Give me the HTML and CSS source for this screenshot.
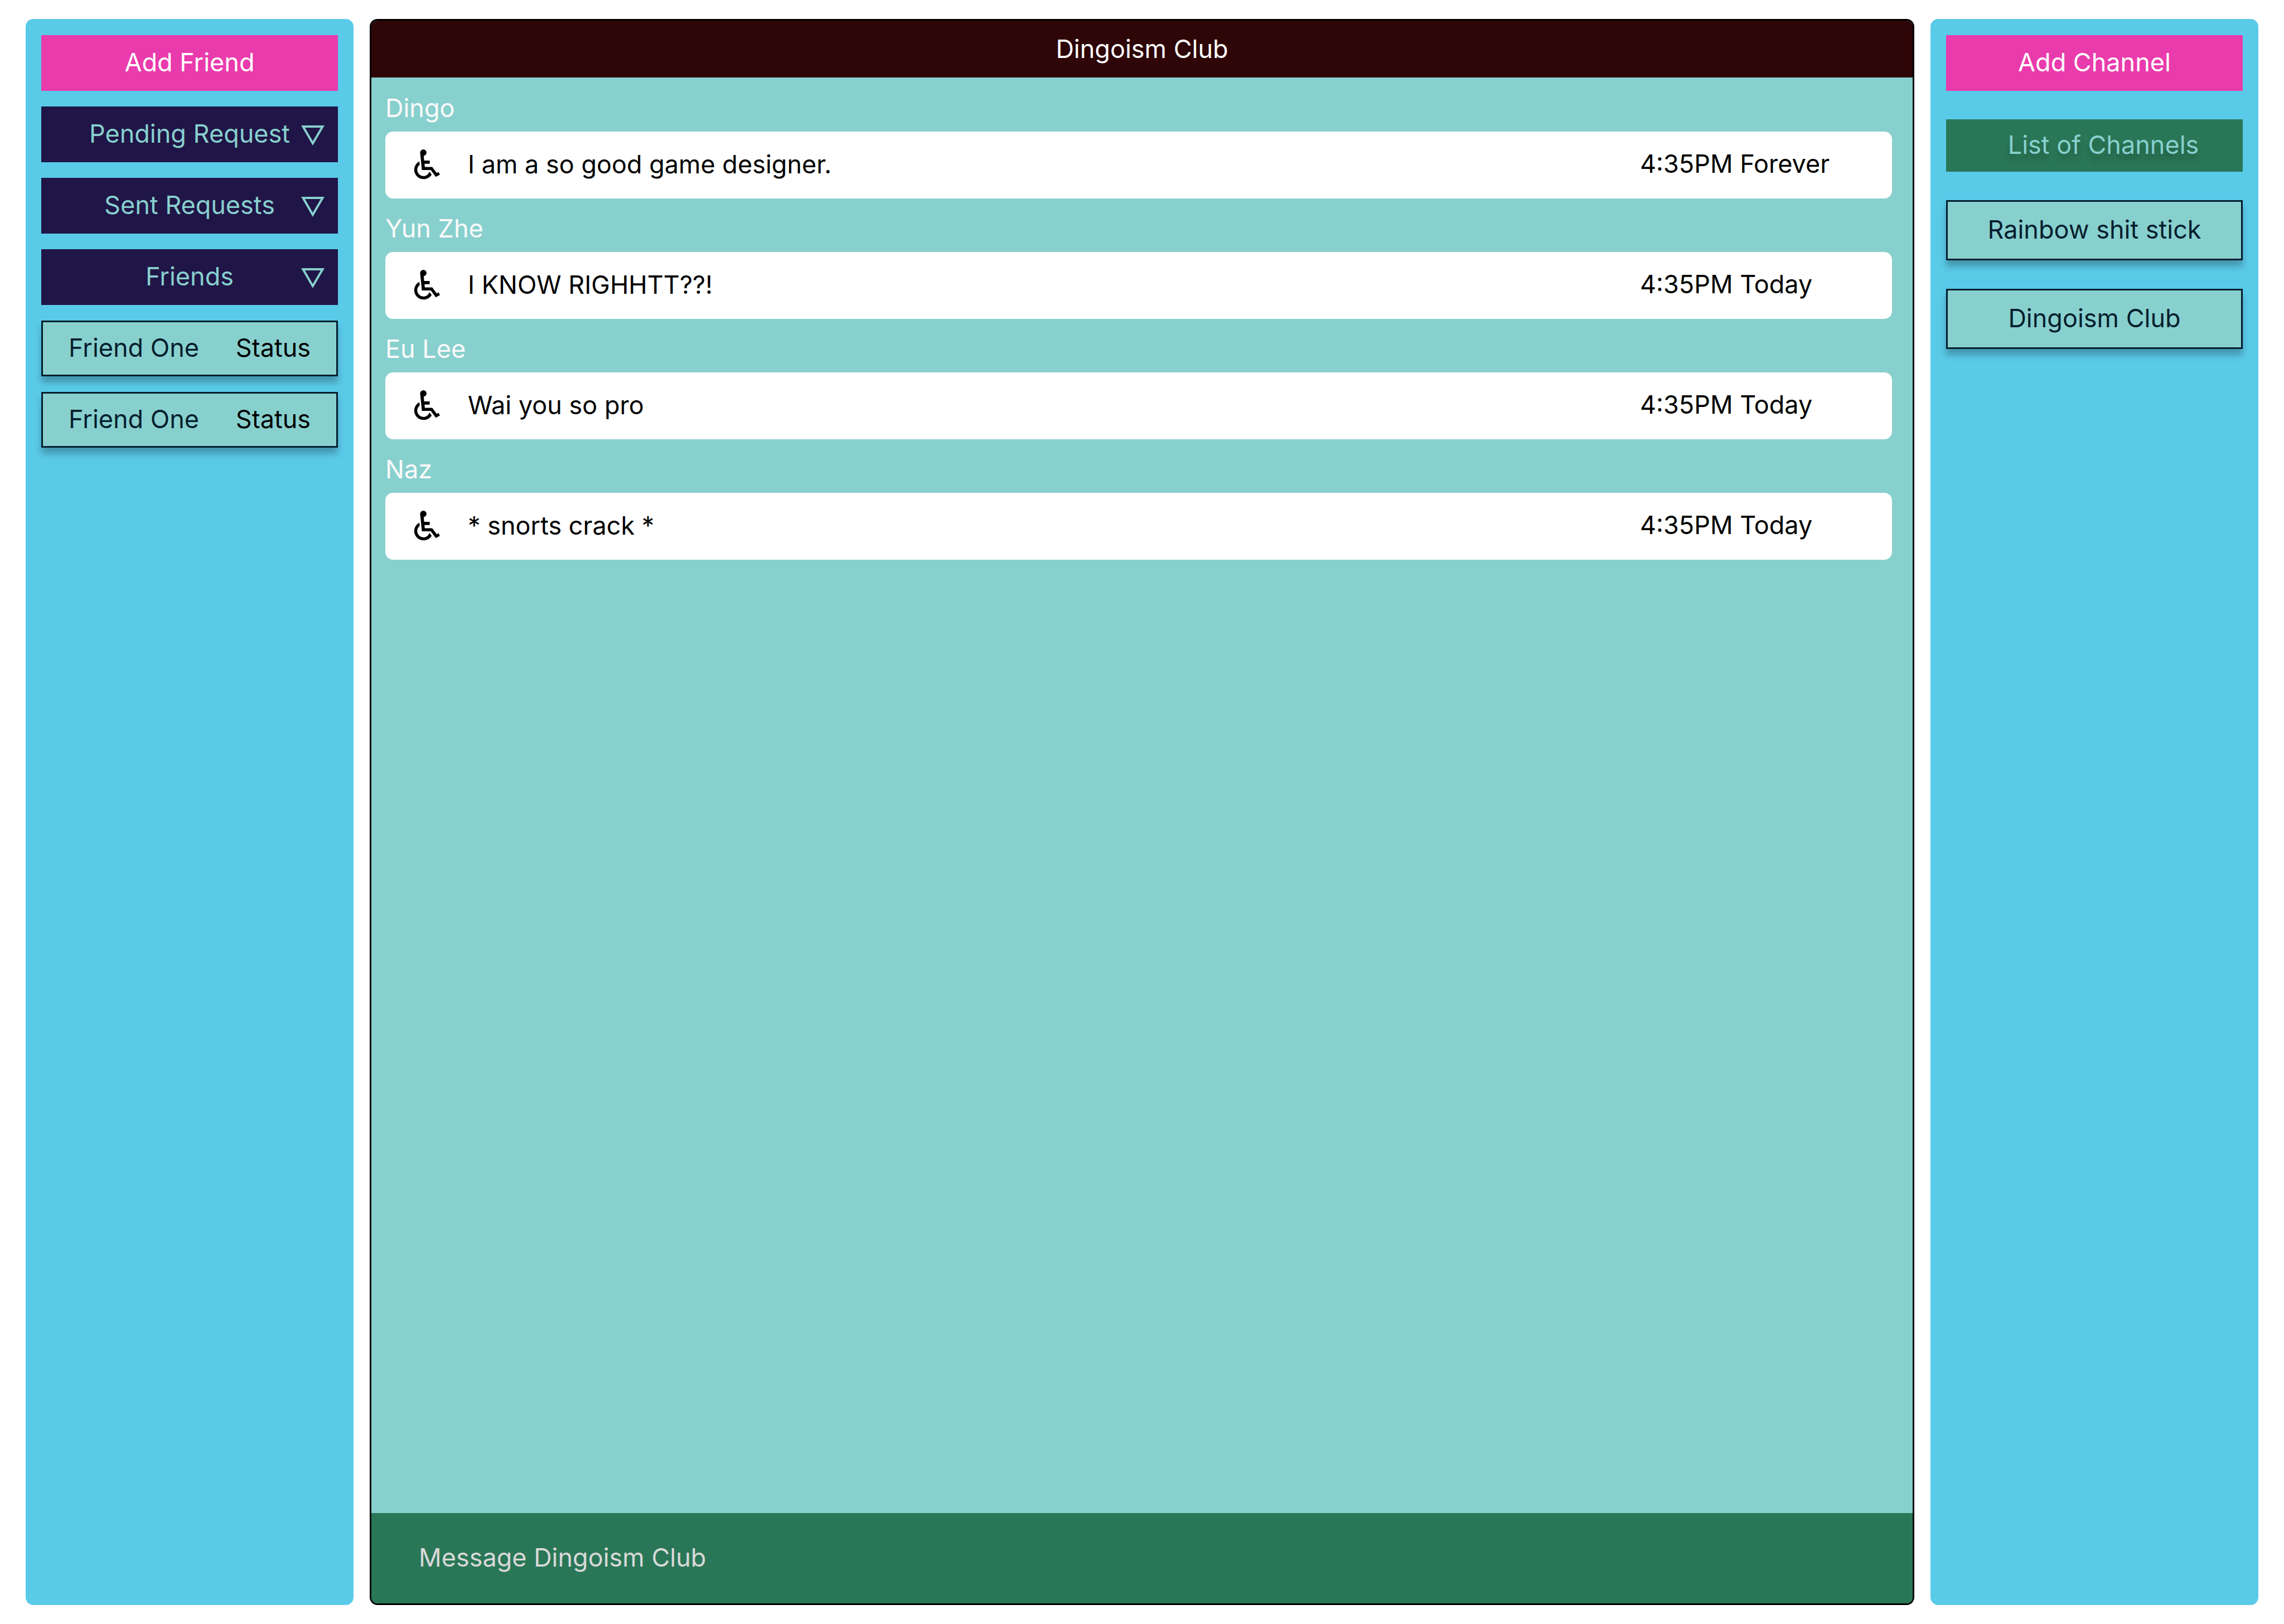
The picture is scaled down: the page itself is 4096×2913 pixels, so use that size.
FILE: index.html
```html
<!DOCTYPE html>
<html lang="en">
<head>
<meta charset="utf-8">
<meta name="viewport" content="width=device-width, initial-scale=1">
<title>Dingoism Club</title>
<link rel="stylesheet" href="styles.css">
</head>
<body>
<svg class="sprite" aria-hidden="true">
  <symbol id="avatar" viewBox="0 0 197 227">
    <circle cx="72" cy="24" r="24"/>
    <path d="M48 24L61 156H128L166 207L197 190L187 170L173 178L139 132H83L81 108H120V84H78L75 47L90 24Z"/>
    <path d="M42 90A71 71 0 1 0 135 190L118 167A47 47 0 1 1 45 116Z"/>
  </symbol>
  <symbol id="arrow" viewBox="0 0 177 152">
    <path fill-rule="evenodd" d="M0 0H177L88 152ZM29 17L88 119L148 17Z"/>
  </symbol>
</svg>
<div class="app">
  <aside class="sidebar friends" aria-label="Friends">
    <button class="btn btn-add" type="button">Add Friend</button>
    <button class="btn btn-toggle" type="button" aria-expanded="false">Pending Request<svg class="arrow" aria-hidden="true"><use href="#arrow"/></svg></button>
    <button class="btn btn-toggle" type="button" aria-expanded="false">Sent Requests<svg class="arrow" aria-hidden="true"><use href="#arrow"/></svg></button>
    <button class="btn btn-toggle" type="button" aria-expanded="true">Friends<svg class="arrow" aria-hidden="true"><use href="#arrow"/></svg></button>
    <a class="btn tile friend" href="#friend-1"><span>Friend One</span><span class="status">Status</span></a>
    <a class="btn tile friend" href="#friend-2"><span>Friend One</span><span class="status">Status</span></a>
  </aside>

  <main class="chat">
    <h1 class="chat-title">Dingoism Club</h1>
    <div class="messages">
      <article class="message">
        <h2 class="author">Dingo</h2>
        <div class="card"><svg class="avatar" aria-hidden="true"><use href="#avatar"/></svg><p class="text">I am a so good game designer.</p><time class="time">4:35PM Forever</time></div>
      </article>
      <article class="message">
        <h2 class="author">Yun Zhe</h2>
        <div class="card"><svg class="avatar" aria-hidden="true"><use href="#avatar"/></svg><p class="text">I KNOW RIGHHTT??!</p><time class="time">4:35PM Today</time></div>
      </article>
      <article class="message">
        <h2 class="author">Eu Lee</h2>
        <div class="card"><svg class="avatar" aria-hidden="true"><use href="#avatar"/></svg><p class="text">Wai you so pro</p><time class="time">4:35PM Today</time></div>
      </article>
      <article class="message">
        <h2 class="author">Naz</h2>
        <div class="card"><svg class="avatar" aria-hidden="true"><use href="#avatar"/></svg><p class="text">* snorts crack *</p><time class="time">4:35PM Today</time></div>
      </article>
    </div>
    <form class="composer">
      <input class="composer-input" type="text" aria-label="Message Dingoism Club" placeholder="Message Dingoism Club">
    </form>
  </main>

  <aside class="sidebar channels" aria-label="Channels">
    <button class="btn btn-add" type="button">Add Channel</button>
    <h2 class="channels-title">List of Channels</h2>
    <a class="btn tile channel" href="#rainbow">Rainbow shit stick</a>
    <a class="btn tile channel" href="#dingoism">Dingoism Club</a>
  </aside>
</div>
</body>
</html>
```
FILE: styles.css
```css
:root {
  --sky: #5acae9;
  --pink: #e93bac;
  --navy: #201547;
  --teal: #88d0ce;
  --green: #2a7757;
  --maroon: #2e0607;
  --ink: #041e2e;
  --line: 56px;
}

* {
  box-sizing: border-box;
}

body {
  margin: 0;
  background: #fff;
  color: #000;
  font: 400 45px/var(--line) Inter, sans-serif;
}

h1,
h2,
p {
  margin: 0;
  font-size: inherit;
  font-weight: inherit;
}

button,
input {
  font: inherit;
}

.sprite {
  display: none;
}

.app {
  display: grid;
  grid-template-columns: 588px minmax(0, 1fr) 588px;
  gap: 29px;
  min-height: 100vh;
  padding: 34px 46px;
}

.sidebar {
  display: flex;
  flex-direction: column;
  padding: 29px 28px;
  border-radius: 14px;
  background: var(--sky);
}

.friends {
  gap: 28px;
}

.channels {
  gap: 51px;
}

/* Buttons and tiles */
.btn {
  position: relative;
  display: flex;
  align-items: center;
  justify-content: center;
  height: 100px;
  padding: 0 0 2px;
  border: 0;
  text-decoration: none;
  cursor: pointer;
}

.btn-add {
  background: var(--pink);
  color: #fff;
}

.btn-toggle {
  background: var(--navy);
  color: var(--teal);
}

.arrow {
  position: absolute;
  top: 34px;
  right: 24px;
  width: 42px;
  height: 36px;
  fill: currentColor;
}

.tile {
  border: 3px solid var(--ink);
  background: var(--teal);
  color: var(--ink);
  box-shadow: 0 11px 11px rgba(0, 0, 0, 0.25);
}

.friend {
  justify-content: space-between;
  padding: 0 46px 2px;
}

.status {
  color: #000;
}

.channel {
  height: 108px;
}

.channels-title {
  display: flex;
  align-items: center;
  justify-content: center;
  height: 94px;
  padding: 0 0 2px 32px;
  background: var(--green);
  color: var(--teal);
  text-shadow: 0 11px 11px rgba(0, 0, 0, 0.25);
}

/* Chat column */
.chat {
  display: flex;
  flex-direction: column;
  overflow: hidden;
  border: 3px solid #000;
  border-radius: 14px;
  background: var(--teal);
}

.chat-title {
  padding: 23px 0;
  background: var(--maroon);
  color: #fff;
  text-align: center;
}

.messages {
  display: flex;
  flex: 1;
  flex-direction: column;
  gap: 26px;
  padding: 27px 37px 27px 25px;
}

.author {
  margin-bottom: 14px;
  color: #fafafa;
}

.card {
  display: grid;
  grid-template-columns: 47px minmax(0, 1fr) 452px;
  align-items: center;
  column-gap: 50px;
  height: 120px;
  padding: 0 0 2px 51px;
  border-radius: 14px;
  background: #fff;
}

.avatar {
  width: 47px;
  height: 54px;
}

.time {
  padding-bottom: 2px;
}

.composer {
  display: flex;
  height: 162px;
  background: var(--green);
}

.composer-input {
  flex: 1;
  padding: 0 85px 2px;
  border: 0;
  background: none;
  color: #fff;
}

.composer-input::placeholder {
  color: #d9d9d9;
  opacity: 1;
}
```
